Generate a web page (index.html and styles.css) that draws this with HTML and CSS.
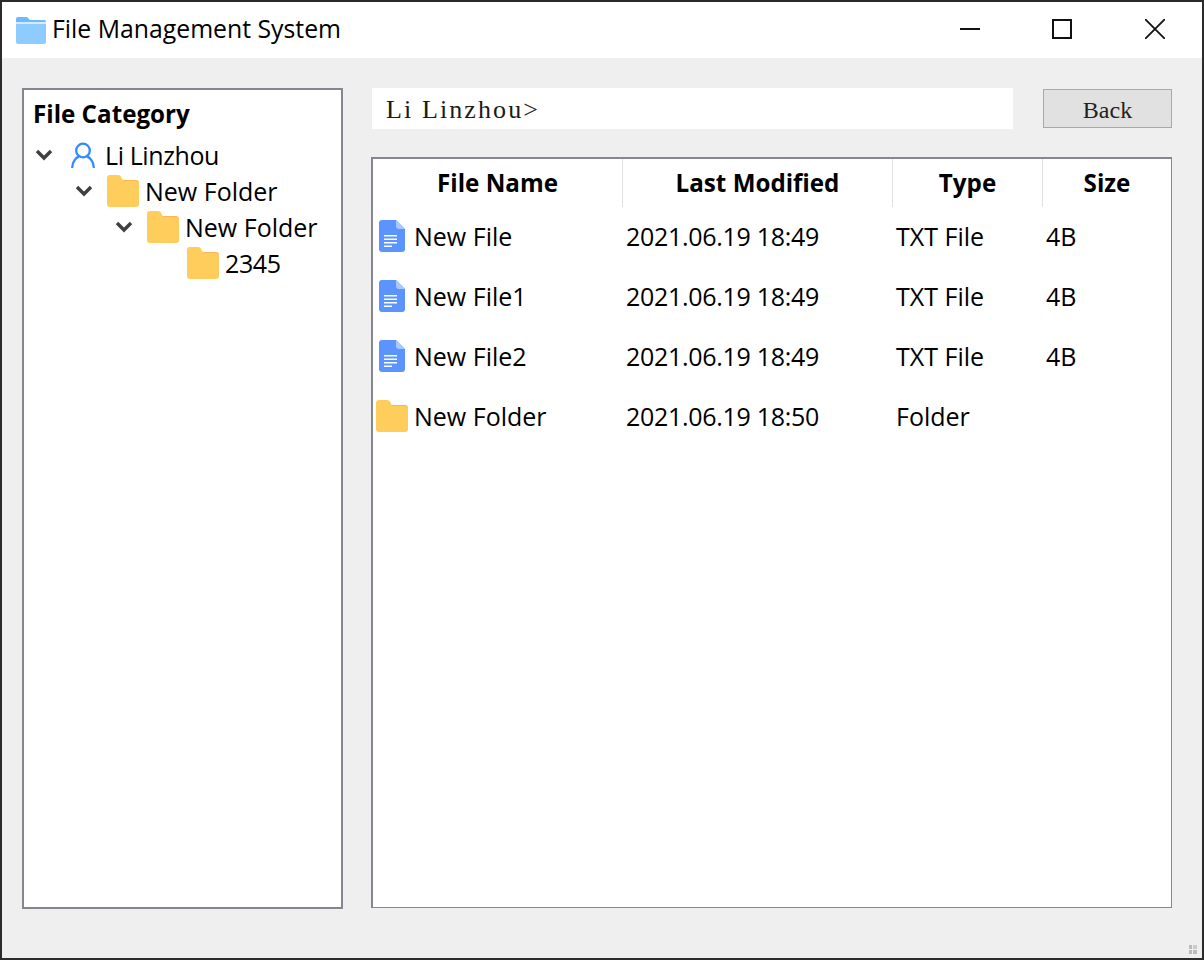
FILE: index.html
```html
<!DOCTYPE html>
<html lang="en">
<head>
  <meta charset="UTF-8" />
  <title>File Management System</title>
  <link rel="stylesheet" href="styles.css">
</head>
<body>
  <svg class="icon-defs" width="0" height="0">
    <symbol id="folder" viewBox="0 0 32 32">
      <path fill="#fbb454" d="M14 5h15a3 3 0 0 1 3 3v6H14z"/>
      <path fill="#ffcd5c" d="M3 0h8c1.500 0 2.500 .8 3.200 2l1.300 2.400c.5 1 1.200 1.600 2.500 1.600H29a3 3 0 0 1 3 3v20a3 3 0 0 1-3 3H3a3 3 0 0 1-3-3V3a3 3 0 0 1 3-3z"/>
    </symbol>
    <symbol id="file" viewBox="0 0 26 32">
      <path fill="#5b94ff" d="M3 0h14l9 9v20a3 3 0 0 1-3 3H3a3 3 0 0 1-3-3V3a3 3 0 0 1 3-3z"/>
      <path fill="#a9c8ff" d="M17 0l9 9h-6a3 3 0 0 1-3-3z"/>
      <path fill="#fff" d="M5 15h13v1.500H5zM5 18.500h13V20H5zM5 22h13v1.500H5zM5 25.500h8V27H5z"/>
    </symbol>
    <symbol id="chevron" viewBox="0 0 18 12">
      <path fill="none" stroke="#404040" stroke-width="3.400" d="M2 2l7 7 7-7"/>
    </symbol>
  </svg>

  <div class="window">
    <header class="titlebar">
      <svg class="app-icon" viewBox="0 0 30 27">
        <path fill="#6bb9ff" d="M2 0h9l3 3h14a2 2 0 0 1 2 2v4H0V2a2 2 0 0 1 2-2z"/>
        <path fill="#d3eaff" d="M0 5h30v3H0z"/>
        <path fill="#8ecbff" d="M0 7h30v18a2 2 0 0 1-2 2H2a2 2 0 0 1-2-2z"/>
      </svg>
      <span class="app-title">File Management System</span>
      <div class="win-controls">
        <button class="win-btn btn-min" aria-label="Minimize">
          <svg viewBox="0 0 20 20"><path d="M0 10h20" stroke="#111" stroke-width="2"/></svg>
        </button>
        <button class="win-btn" aria-label="Maximize">
          <svg viewBox="0 0 20 20"><path d="M1 1h18v18H1z" fill="none" stroke="#111" stroke-width="2"/></svg>
        </button>
        <button class="win-btn" aria-label="Close">
          <svg viewBox="0 0 20 20"><path d="M0 0l20 20M20 0L0 20" stroke="#111" stroke-width="1.800"/></svg>
        </button>
      </div>
    </header>

    <main class="content">
      <aside class="tree-panel">
        <h2 class="tree-title">File Category</h2>
        <ul class="tree">
          <li class="tree-row level-0">
            <svg class="chevron"><use href="#chevron"/></svg>
            <svg class="user-icon" viewBox="0 0 24 26">
              <circle cx="12" cy="8.500" r="6.800" fill="none" stroke="#2f8cff" stroke-width="2.300"/>
              <path d="M1.200 25.500c0-6 4.500-10.200 6-10.500M22.800 25.500c0-6-4.500-10.200-6-10.500" fill="none" stroke="#2f8cff" stroke-width="2.300" stroke-linecap="round"/>
            </svg>
            <span class="tight">Li Linzhou</span>
          </li>
          <li class="tree-row level-1">
            <svg class="chevron"><use href="#chevron"/></svg>
            <svg class="folder-icon"><use href="#folder"/></svg>
            <span>New Folder</span>
          </li>
          <li class="tree-row level-2">
            <svg class="chevron"><use href="#chevron"/></svg>
            <svg class="folder-icon"><use href="#folder"/></svg>
            <span>New Folder</span>
          </li>
          <li class="tree-row level-3">
            <span class="chevron"></span>
            <svg class="folder-icon"><use href="#folder"/></svg>
            <span class="tight">2345</span>
          </li>
        </ul>
      </aside>

      <section class="main-panel">
        <div class="toolbar">
          <div class="path-bar">Li Linzhou&gt;</div>
          <button class="back-btn">Back</button>
        </div>

        <div class="file-table">
          <div class="file-head">
            <div class="head-cell">File Name</div>
            <div class="head-cell">Last Modified</div>
            <div class="head-cell">Type</div>
            <div class="head-cell">Size</div>
          </div>
          <div class="file-row">
            <div class="name-cell"><svg class="file-icon"><use href="#file"/></svg>New File</div>
            <div class="cell date-cell">2021.06.19 18:49</div>
            <div class="cell">TXT File</div>
            <div class="cell">4B</div>
          </div>
          <div class="file-row">
            <div class="name-cell"><svg class="file-icon"><use href="#file"/></svg>New File1</div>
            <div class="cell date-cell">2021.06.19 18:49</div>
            <div class="cell">TXT File</div>
            <div class="cell">4B</div>
          </div>
          <div class="file-row">
            <div class="name-cell"><svg class="file-icon"><use href="#file"/></svg>New File2</div>
            <div class="cell date-cell">2021.06.19 18:49</div>
            <div class="cell">TXT File</div>
            <div class="cell">4B</div>
          </div>
          <div class="file-row">
            <div class="name-cell"><svg class="row-folder"><use href="#folder"/></svg>New Folder</div>
            <div class="cell date-cell">2021.06.19 18:50</div>
            <div class="cell">Folder</div>
            <div class="cell"></div>
          </div>
        </div>
      </section>
    </main>

    <div class="grip"></div>
  </div>
</body>
</html>
```

FILE: styles.css
```css
* {
  box-sizing: border-box;
}

html, body {
  margin: 0;
  height: 100%;
}

body {
  font-family: "Open Sans", "Noto Sans", sans-serif;
  font-size: 25px;
  color: #000;
  overflow: hidden;
}

.icon-defs {
  display: block;
  height: 0;
}

.window {
  position: relative;
  width: 1204px;
  height: 960px;
  border: 2px solid #2b2b2b;
  background-color: #efefef;
  display: flex;
  flex-direction: column;
}

/* Title bar */
.titlebar {
  height: 56px;
  background-color: #fff;
  display: flex;
  align-items: center;
  padding-left: 14px;
}

.app-icon {
  width: 30px;
  height: 27px;
  margin: 0 6px 0 0;
}

.app-title {
  font-size: 24.8px;
  line-height: 30px;
  padding-bottom: 4px;
  white-space: nowrap;
}

.win-controls {
  margin-left: auto;
  display: flex;
  padding-right: 1px;
}

.win-btn {
  width: 93px;
  height: 56px;
  border: none;
  background: none;
  padding: 0 0 2px;
  display: flex;
  align-items: center;
  justify-content: center;
}

.btn-min {
  width: 91px;
}

.win-btn svg {
  width: 20px;
  height: 20px;
}

/* Body */
.content {
  flex: 1;
  display: flex;
  padding: 30px 30px 49px 20px;
}

.tree-panel {
  width: 321px;
  background-color: #fff;
  border: 2px solid #858790;
  padding: 7px 9px;
  margin-right: 28px;
}

.tree-title {
  margin: 0;
  font-size: 24.2px;
  font-weight: 700;
  line-height: 34px;
}

.tree {
  list-style: none;
  margin: 6px 0 0;
  padding: 0;
}

.tree-row {
  height: 36px;
  display: flex;
  align-items: center;
  white-space: nowrap;
}

.tight {
  letter-spacing: -0.4px;
}

.level-0 { padding-left: 2px; }
.level-1 { padding-left: 42px; }
.level-2 { padding-left: 82px; }
.level-3 { padding-left: 122px; }

.chevron {
  display: block;
  width: 18px;
  height: 12px;
  margin-right: 14px;
  flex-shrink: 0;
}

.user-icon {
  width: 24px;
  height: 26px;
  margin: 0 10px 0 4px;
}

.folder-icon {
  width: 32px;
  height: 32px;
  margin-right: 6px;
}

.main-panel {
  flex: 1;
  display: flex;
  flex-direction: column;
  padding-bottom: 1px;
}

.toolbar {
  display: flex;
  align-items: center;
  height: 41px;
  margin-bottom: 28px;
}

.path-bar {
  width: 641px;
  height: 41px;
  margin-left: 1px;
  background-color: #fff;
  font-family: "Liberation Serif", serif;
  font-size: 26px;
  letter-spacing: 2.100px;
  line-height: 43px;
  padding-left: 14px;
  color: #1a1a1a;
}

.back-btn {
  width: 129px;
  height: 39px;
  margin-left: 30px;
  border: 1px solid #a9a9a9;
  background-color: #e1e1e1;
  font-family: "Liberation Serif", serif;
  font-size: 24px;
  color: #222;
  padding: 4px 0 0;
}

/* File list */
.file-table {
  flex: 1;
  background-color: #fff;
  border: 2px solid #858790;
  border-bottom-width: 1px;
  border-right-width: 1px;
}

.file-head,
.file-row {
  display: grid;
  grid-template-columns: 250px 270px 150px 1fr;
}

.file-head {
  height: 48px;
}

.head-cell {
  font-size: 24.2px;
  font-weight: 700;
  line-height: 48px;
  text-align: center;
  border-right: 1px solid #e0e0e0;
}

.head-cell:last-child {
  border-right: none;
}

.file-row {
  height: 60px;
  align-items: center;
  padding-bottom: 2px;
}

.name-cell {
  display: flex;
  align-items: center;
  padding-left: 6px;
  white-space: nowrap;
}

.cell {
  padding-left: 3px;
  white-space: nowrap;
}

.date-cell {
  letter-spacing: -0.3px;
}

.file-icon {
  width: 26px;
  height: 32px;
  margin: 0 9px 0 0;
}

.row-folder {
  width: 32px;
  height: 32px;
  margin: 0 6px 0 -3px;
}

/* resize handle in the corner */
.grip {
  position: absolute;
  right: 5px;
  bottom: 4px;
  width: 8px;
  height: 9px;
  background:
    linear-gradient(#bbb, #bbb) 0 0 / 3px 4px no-repeat,
    linear-gradient(#ccc, #ccc) 100% 0 / 4px 4px no-repeat,
    linear-gradient(#bbb, #bbb) 0 100% / 3px 4px no-repeat,
    linear-gradient(#bbb, #bbb) 100% 100% / 4px 4px no-repeat;
}
```
